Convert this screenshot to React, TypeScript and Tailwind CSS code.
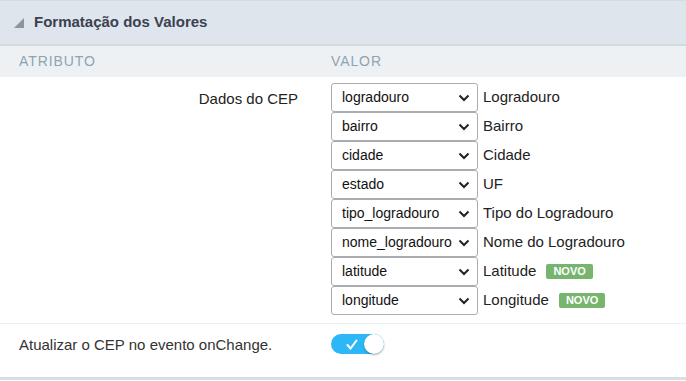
import React from 'react';

interface CepField {
  value: string;
  label: string;
  isNew?: boolean;
}

const cepFields: CepField[] = [
  { value: 'logradouro', label: 'Logradouro' },
  { value: 'bairro', label: 'Bairro' },
  { value: 'cidade', label: 'Cidade' },
  { value: 'estado', label: 'UF' },
  { value: 'tipo_logradouro', label: 'Tipo do Logradouro' },
  { value: 'nome_logradouro', label: 'Nome do Logradouro' },
  { value: 'latitude', label: 'Latitude', isNew: true },
  { value: 'longitude', label: 'Longitude', isNew: true },
];

const Chevron: React.FC = () => (
  <svg width="12" height="8" viewBox="0 0 12 8" className="shrink-0">
    <path d="M1.5 1.5 L6 6 L10.5 1.5" fill="none" stroke="#222" strokeWidth="2" />
  </svg>
);

const App: React.FC = () => {
  return (
    <div
      className="w-[686px] h-[381px] bg-white text-[15px] text-[#333]"
      style={{ fontFamily: '"Liberation Sans", Arial, sans-serif' }}
    >
      {/* Cabeçalho */}
      <div className="h-[46px] border-t border-b-2 border-t-[#d3dce1] border-b-[#d1dbdf] bg-[#dfe5ec] flex items-center pl-[14px]">
        <svg width="10" height="10" viewBox="0 0 10 10" className="mr-[10px]">
          <polygon points="10,0 10,10 0,10" fill="#8c949c" />
        </svg>
        <span className="font-bold text-[15px] text-[#3b4150]">Formatação dos Valores</span>
      </div>

      {/* Colunas */}
      <div className="h-[31px] bg-[#eef1f4] flex items-center text-[14px] tracking-[0.9px] text-[#8fa3b1]">
        <div className="w-[312px] pl-[19px]">ATRIBUTO</div>
        <div className="pl-[19px]">VALOR</div>
      </div>

      {/* Dados do CEP */}
      <div className="flex pt-[6px] pb-[8px] border-b border-[#eceff1]">
        <div className="w-[312px] pr-[14px] pt-[5px] text-right text-[#222]">Dados do CEP</div>
        <div className="pl-[19px] flex flex-col">
          {cepFields.map((field) => (
            <div key={field.value} className="flex items-center h-[29px]">
              <div className="w-[147px] h-[29px] border border-[#a9adb2] rounded-[3px] flex items-center justify-between pl-[10px] pr-[7px] bg-white text-[#111] text-[14px]">
                <span>{field.value}</span>
                <Chevron />
              </div>
              <span className="ml-[5px] text-[#222]">{field.label}</span>
              {field.isNew && (
                <span className="ml-[10px] bg-[#77b56e] text-white font-bold text-[11px] leading-[15px] px-[7px] rounded-[2px]">
                  NOVO
                </span>
              )}
            </div>
          ))}
        </div>
      </div>

      {/* onChange */}
      <div className="flex items-start h-[56px] border-b-[3px] border-[#d8dfe4]">
        <div className="w-[312px] pl-[19px] pt-[10px] text-[#333]">Atualizar o CEP no evento onChange.</div>
        <div className="pl-[19px] pt-[10px]">
          <div className="relative w-[53px] h-[20px] rounded-full bg-[#2cb7f6] flex items-center">
            <svg width="12" height="11" viewBox="0 0 12 11" className="ml-[15px] mt-[1px]">
              <path d="M1.5 6 L4.5 9.5 L10.5 1.5" fill="none" stroke="white" strokeWidth="2" strokeLinecap="round" />
            </svg>
            <div className="absolute right-0 top-0 w-[20px] h-[20px] rounded-full bg-white shadow-[0_1px_2px_rgba(0,0,0,0.35)]" />
          </div>
        </div>
      </div>
    </div>
  );
};

export default App;
